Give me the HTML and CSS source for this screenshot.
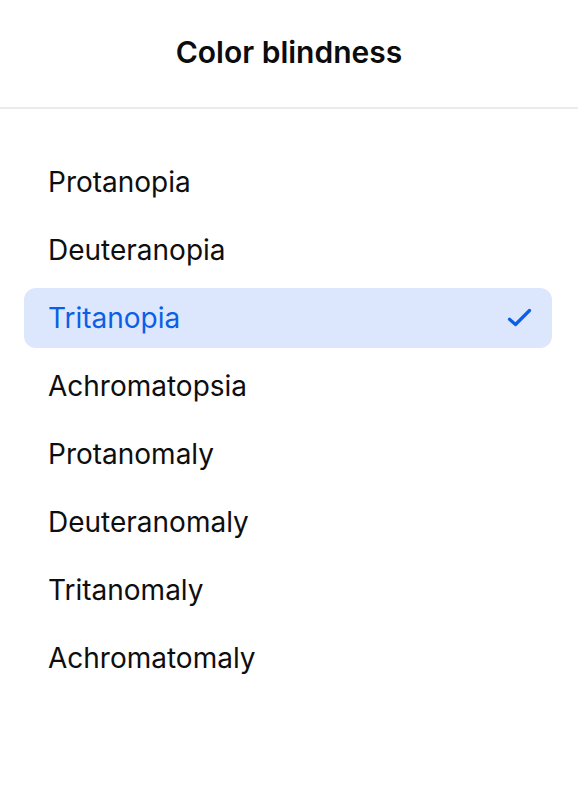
FILE: index.html
```html
<!DOCTYPE html>
<html>
<head>
<meta charset="utf-8">
<link rel="stylesheet" href="styles.css">
</head>
<body>
<div class="sheet">
  <header class="header"><h1 class="title">Color blindness</h1></header>
  <ul class="list">
    <li class="item">Protanopia</li>
    <li class="item">Deuteranopia</li>
    <li class="item selected"><span>Tritanopia</span>
      <svg class="check" width="28" height="28" viewBox="0 0 28 28"><path d="M5.5 15.3 L11.5 20.5 L25.5 6.5" fill="none" stroke="#0b5fe6" stroke-width="3.2" stroke-linecap="round" stroke-linejoin="round"/></svg>
    </li>
    <li class="item">Achromatopsia</li>
    <li class="item">Protanomaly</li>
    <li class="item">Deuteranomaly</li>
    <li class="item">Tritanomaly</li>
    <li class="item">Achromatomaly</li>
  </ul>
</div>
</body>
</html>
```
FILE: styles.css
```css
html, body { margin: 0; padding: 0; background: #fff; }
body { font-family: Inter, "Noto Sans", sans-serif; color: #111; }
.sheet { width: 578px; }
.header {
  height: 107px;
  border-bottom: 2px solid #ebebeb;
  display: flex;
  align-items: center;
  justify-content: center;
}
.title {
  margin: 0;
  font-size: 30px;
  font-weight: 600;
  color: #0c0c0c;
  padding-bottom: 4px;
}
.list {
  list-style: none;
  margin: 0;
  padding: 43px 26px 0 24px;
  display: flex;
  flex-direction: column;
  gap: 8px;
}
.item {
  height: 60px;
  display: flex;
  align-items: center;
  justify-content: space-between;
  padding: 0 20px 0 24px;
  border-radius: 12px;
  font-size: 28px;
  color: #0e0e0e;
}
.item.selected {
  background: #dce6fd;
  color: #0b5fe6;
}
.check { display: block; }
```
